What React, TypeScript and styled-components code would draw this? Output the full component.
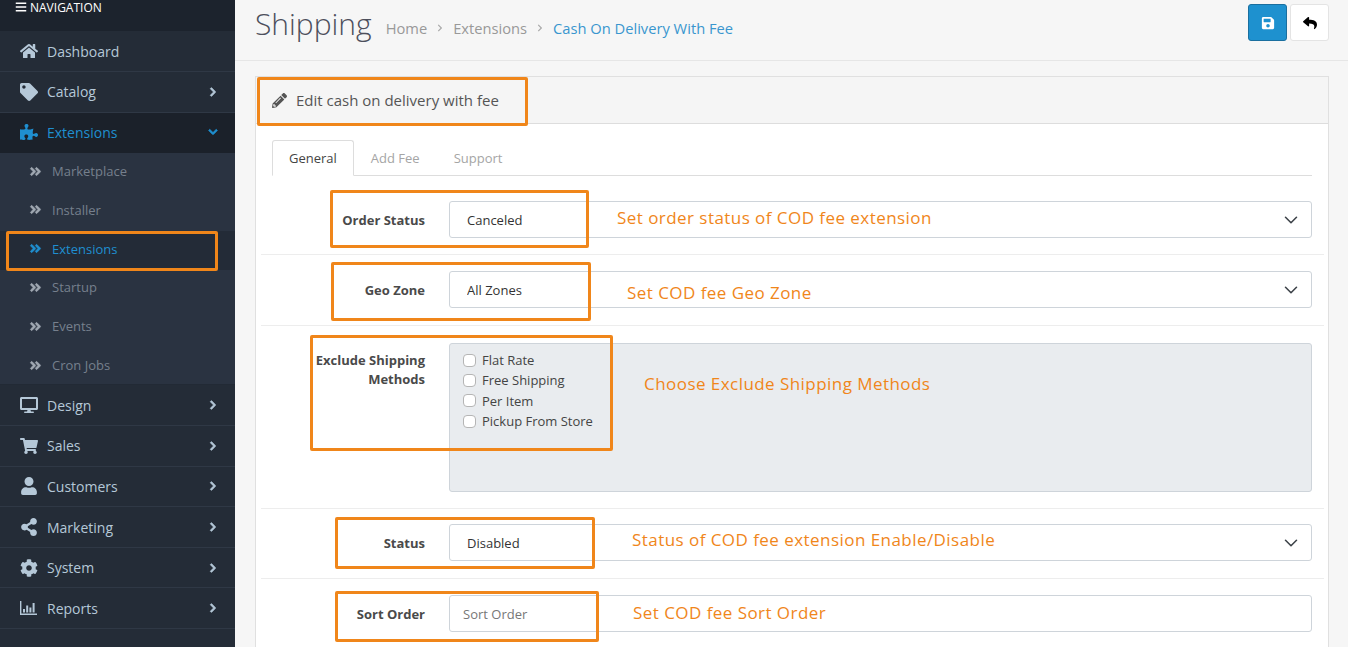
import React from "react"
import styled, { createGlobalStyle } from "styled-components"
import { ChevronDown } from "lucide-react"
import {
  FaAngleDoubleRight,
  FaBars,
  FaChevronDown,
  FaChevronRight,
  FaCog,
  FaDesktop,
  FaHome,
  FaPencilAlt,
  FaPuzzlePiece,
  FaReply,
  FaSave,
  FaShareAlt,
  FaShoppingCart,
  FaTag,
  FaUser,
} from "react-icons/fa"

const ORANGE = "#f0861a"

const GlobalStyle = createGlobalStyle`
  html, body {
    margin: 0;
    padding: 0;
    height: 100%;
    overflow: hidden;
    background: #f6f6f6;
    font-family: "Open Sans", "Liberation Sans", sans-serif;
  }
  * { box-sizing: border-box; }
`

const Page = styled.div`
  position: relative;
  display: flex;
  width: 1348px;
  height: 647px;
  overflow: hidden;
`

const Sidebar = styled.nav`
  flex: 0 0 235px;
  background: #242c37;
`

const NavHeader = styled.div`
  display: flex;
  align-items: flex-start;
  gap: 3px;
  height: 31.4px;
  padding: 1px 0 0 15px;
  background: #1c232d;
  color: #fff;
  font-size: 12px;
  line-height: 13px;
`

const NavItem = styled.div<{ $active?: boolean }>`
  display: flex;
  align-items: center;
  height: 40.6px;
  padding: 0 17px 0 20px;
  border-bottom: 1px solid ${p => (p.$active ? "#1b212a" : "#2f3845")};
  background: ${p => (p.$active ? "#1b212a" : "transparent")};
  color: ${p => (p.$active ? "#1f8fd0" : "#b5c8d8")};
  font-size: 14px;
`

const NavIcon = styled.span`
  display: flex;
  flex: 0 0 27px;
  align-items: center;
  font-size: 18px;
`

const NavLabel = styled.span`
  flex: 1;
`

const NavArrow = styled.span`
  display: flex;
  font-size: 10px;
  svg {
    stroke: currentColor;
    stroke-width: 40;
  }
`

const SubMenu = styled.div`
  height: 232.3px;
  background: #2a3341;
  border-bottom: 1px solid #222a35;
`

const SubItem = styled.div<{ $active?: boolean }>`
  display: flex;
  align-items: center;
  gap: 10px;
  height: 38.8px;
  padding: 0 0 3px 29px;
  background: ${p => (p.$active ? "#232b37" : "transparent")};
  color: ${p => (p.$active ? "#1f8fd0" : "#76808d")};
  font-size: 13px;
  svg {
    font-size: 13px;
    color: ${p => (p.$active ? "#1f8fd0" : "#a0a8b2")};
    stroke: currentColor;
    stroke-width: 24;
  }
`

const Main = styled.main`
  flex: 1;
  min-width: 0;
  background: #f6f6f6;
`

const PageHeader = styled.header`
  display: flex;
  align-items: flex-start;
  height: 61px;
  padding: 4px 19px 0 20px;
  border-bottom: 1px solid #e6e6e6;
`

const Title = styled.h1`
  margin: 0 14px 0 0;
  color: #4d4f5c;
  font-size: 30px;
  font-weight: 300;
  line-height: 40px;
`

const Breadcrumb = styled.ol`
  display: flex;
  flex: 1;
  align-items: center;
  gap: 9px;
  height: 40px;
  margin: 4px 0 0;
  padding: 0;
  list-style: none;
  color: #999;
  font-size: 14.7px;
  svg {
    font-size: 8px;
    color: #aaa;
  }
`

const Crumb = styled.li<{ $current?: boolean }>`
  color: ${p => (p.$current ? "#3a96cf" : "#999")};
`

const Separator = styled.li`
  display: flex;
`

const Actions = styled.div`
  display: flex;
  gap: 3px;
`

const IconButton = styled.button<{ $primary?: boolean }>`
  display: flex;
  align-items: center;
  justify-content: center;
  width: 39px;
  height: 37px;
  padding: 0;
  border: 1px solid ${p => (p.$primary ? "#1a6f9f" : "#e4e4e4")};
  border-radius: 3px;
  background: ${p => (p.$primary ? "#1e91cf" : "#fff")};
  color: ${p => (p.$primary ? "#fff" : "#000")};
  font-size: 14px;
`

const Panel = styled.section`
  margin: 15px 19px 0 20px;
  border: 1px solid #e0e0e0;
  border-bottom: 0;
  background: #fff;
  height: 600px;
`

const PanelHeading = styled.div`
  display: flex;
  align-items: center;
  gap: 9px;
  height: 47px;
  padding-left: 16px;
  border-bottom: 1px solid #ddd;
  background: #f5f5f5;
  color: #555;
  font-size: 15px;
`

const PanelBody = styled.div`
  padding: 16px 16px 0;
`

const Tabs = styled.div`
  display: flex;
  height: 36px;
  border-bottom: 1px solid #ddd;
`

const Tab = styled.div<{ $active?: boolean }>`
  display: flex;
  align-items: center;
  height: ${p => (p.$active ? "36px" : "35px")};
  padding: 0 16px;
  border: 1px solid ${p => (p.$active ? "#ddd" : "transparent")};
  border-bottom: ${p => (p.$active ? "1px solid #fff" : "0")};
  border-radius: 3px 3px 0 0;
  background: ${p => (p.$active ? "#fff" : "transparent")};
  color: ${p => (p.$active ? "#444" : "#a5a5a5")};
  font-size: 13px;
`

const Rows = styled.div`
  margin: 9px -12px 0 -11px;
`

const Row = styled.div<{ $top?: number; $bottom?: number }>`
  display: grid;
  grid-template-columns: 164px 1fr;
  column-gap: 24px;
  padding: ${p => p.$top ?? 16}px 12px ${p => p.$bottom ?? 16}px 0;
  border-bottom: 1px solid #ededed;
  &:last-child { border-bottom: 0; }
`

const Label = styled.label<{ $top?: boolean }>`
  align-self: ${p => (p.$top ? "start" : "center")};
  margin-top: ${p => (p.$top ? "8px" : "1px")};
  color: #4a4a4a;
  font-size: 13px;
  font-weight: 700;
  line-height: 19px;
  text-align: right;
`

const SelectWrap = styled.div`
  position: relative;
  svg {
    position: absolute;
    top: 8px;
    right: 10px;
    color: #3c4248;
    pointer-events: none;
  }
`

const Select = styled.select`
  display: block;
  width: 100%;
  height: 37px;
  padding: 0 17px;
  border: 1px solid #ced4da;
  border-radius: 3px;
  appearance: none;
  background: #fff;
  color: #333;
  font-family: inherit;
  font-size: 13px;
`

const Input = styled.input`
  display: block;
  width: 100%;
  height: 37px;
  padding: 0 13px;
  border: 1px solid #ced4da;
  border-radius: 3px;
  font-family: inherit;
  font-size: 13px;
  &::placeholder { color: #777; opacity: 1; }
`

const CheckList = styled.div`
  height: 149px;
  padding: 6px 13px;
  border: 1px solid #ced4da;
  border-radius: 3px;
  background: #e9ecef;
`

const CheckRow = styled.label`
  display: flex;
  align-items: center;
  gap: 6px;
  height: 20.3px;
  color: #444;
  font-size: 13px;
`

const Check = styled.input`
  width: 13px;
  height: 13px;
  margin: 0;
  appearance: none;
  border: 1px solid #b5b5b5;
  border-radius: 4px;
  background: #fff;
`

const Callout = styled.div<{ $x: number; $y: number; $w: number; $h: number }>`
  position: absolute;
  left: ${p => p.$x}px;
  top: ${p => p.$y}px;
  width: ${p => p.$w}px;
  height: ${p => p.$h}px;
  border: 3px solid ${ORANGE};
  border-radius: 2px;
  pointer-events: none;
`

const Note = styled.div<{ $x: number; $y: number }>`
  position: absolute;
  left: ${p => p.$x}px;
  top: ${p => p.$y}px;
  color: ${ORANGE};
  font-size: 17px;
  letter-spacing: 0.45px;
  line-height: 22px;
  white-space: nowrap;
`

// font awesome 4 bar-chart, the package only has the boxed one
const BarChartIcon = () => (
  <svg width="17" height="14" viewBox="0 0 17 14" fill="currentColor">
    <path d="M0 0h1.4v12.6H17V14H0z" />
    <path d="M3 8h2v3.6H3zM6.2 4.5h2v7.1h-2zM9.4 6.5h2v5.1h-2zM12.6 2h2v9.6h-2z" />
  </svg>
)

const mainMenuTop = [
  { icon: <FaHome />, label: "Dashboard" },
  { icon: <FaTag />, label: "Catalog", arrow: true },
]

const mainMenuBottom = [
  { icon: <FaDesktop />, label: "Design" },
  { icon: <FaShoppingCart />, label: "Sales" },
  { icon: <FaUser />, label: "Customers" },
  { icon: <FaShareAlt />, label: "Marketing" },
  { icon: <FaCog />, label: "System" },
  { icon: <BarChartIcon />, label: "Reports" },
]

const subMenu = ["Marketplace", "Installer", "Extensions", "Startup", "Events", "Cron Jobs"]

const methods = ["Flat Rate", "Free Shipping", "Per Item", "Pickup From Store"]

const callouts = [
  { x: 6, y: 231, w: 212, h: 40 },
  { x: 257, y: 77, w: 271, h: 49 },
  { x: 330, y: 190, w: 259, h: 58 },
  { x: 331, y: 262, w: 260, h: 59 },
  { x: 310, y: 335, w: 303, h: 116 },
  { x: 335, y: 517, w: 260, h: 52 },
  { x: 335, y: 591, w: 264, h: 51 },
]

const notes = [
  { x: 617, y: 207, text: "Set order status of COD fee extension" },
  { x: 627, y: 282, text: "Set COD fee Geo Zone" },
  { x: 644, y: 373, text: "Choose Exclude Shipping Methods" },
  { x: 632, y: 529, text: "Status of COD fee extension Enable/Disable" },
  { x: 633, y: 602, text: "Set COD fee Sort Order" },
]

const SelectField = ({ value }: { value: string }) => (
  <SelectWrap>
    <Select defaultValue={value}>
      <option>{value}</option>
    </Select>
    <ChevronDown size={22} strokeWidth={1.7} />
  </SelectWrap>
)

export default function App() {
  return (
    <Page>
      <GlobalStyle />
      <Sidebar>
        <NavHeader>
          <FaBars size={12} />
          NAVIGATION
        </NavHeader>
        {mainMenuTop.map(item => (
          <NavItem key={item.label}>
            <NavIcon>{item.icon}</NavIcon>
            <NavLabel>{item.label}</NavLabel>
            {item.arrow && (
              <NavArrow>
                <FaChevronRight />
              </NavArrow>
            )}
          </NavItem>
        ))}
        <NavItem $active>
          <NavIcon>
            <FaPuzzlePiece />
          </NavIcon>
          <NavLabel>Extensions</NavLabel>
          <NavArrow>
            <FaChevronDown />
          </NavArrow>
        </NavItem>
        <SubMenu>
          {subMenu.map((label, i) => (
            <SubItem key={label} $active={i === 2}>
              <FaAngleDoubleRight />
              {label}
            </SubItem>
          ))}
        </SubMenu>
        {mainMenuBottom.map(item => (
          <NavItem key={item.label}>
            <NavIcon>{item.icon}</NavIcon>
            <NavLabel>{item.label}</NavLabel>
            <NavArrow>
              <FaChevronRight />
            </NavArrow>
          </NavItem>
        ))}
      </Sidebar>
      <Main>
        <PageHeader>
          <Title>Shipping</Title>
          <Breadcrumb>
            <Crumb>Home</Crumb>
            <Separator>
              <FaChevronRight />
            </Separator>
            <Crumb>Extensions</Crumb>
            <Separator>
              <FaChevronRight />
            </Separator>
            <Crumb $current>Cash On Delivery With Fee</Crumb>
          </Breadcrumb>
          <Actions>
            <IconButton $primary aria-label="Save">
              <FaSave />
            </IconButton>
            <IconButton aria-label="Back">
              <FaReply />
            </IconButton>
          </Actions>
        </PageHeader>
        <Panel>
          <PanelHeading>
            <FaPencilAlt size={15} />
            Edit cash on delivery with fee
          </PanelHeading>
          <PanelBody>
            <Tabs>
              <Tab $active>General</Tab>
              <Tab>Add Fee</Tab>
              <Tab>Support</Tab>
            </Tabs>
            <Rows>
              <Row>
                <Label>Order Status</Label>
                <SelectField value="Canceled" />
              </Row>
              <Row $bottom={17}>
                <Label>Geo Zone</Label>
                <SelectField value="All Zones" />
              </Row>
              <Row $top={17}>
                <Label $top>Exclude Shipping Methods</Label>
                <CheckList>
                  {methods.map(method => (
                    <CheckRow key={method}>
                      <Check type="checkbox" />
                      {method}
                    </CheckRow>
                  ))}
                </CheckList>
              </Row>
              <Row $top={15} $bottom={17}>
                <Label>Status</Label>
                <SelectField value="Disabled" />
              </Row>
              <Row>
                <Label>Sort Order</Label>
                <Input placeholder="Sort Order" />
              </Row>
            </Rows>
          </PanelBody>
        </Panel>
      </Main>
      {callouts.map(c => (
        <Callout key={`${c.x}-${c.y}`} $x={c.x} $y={c.y} $w={c.w} $h={c.h} />
      ))}
      {notes.map(n => (
        <Note key={n.text} $x={n.x} $y={n.y}>
          {n.text}
        </Note>
      ))}
    </Page>
  )
}
